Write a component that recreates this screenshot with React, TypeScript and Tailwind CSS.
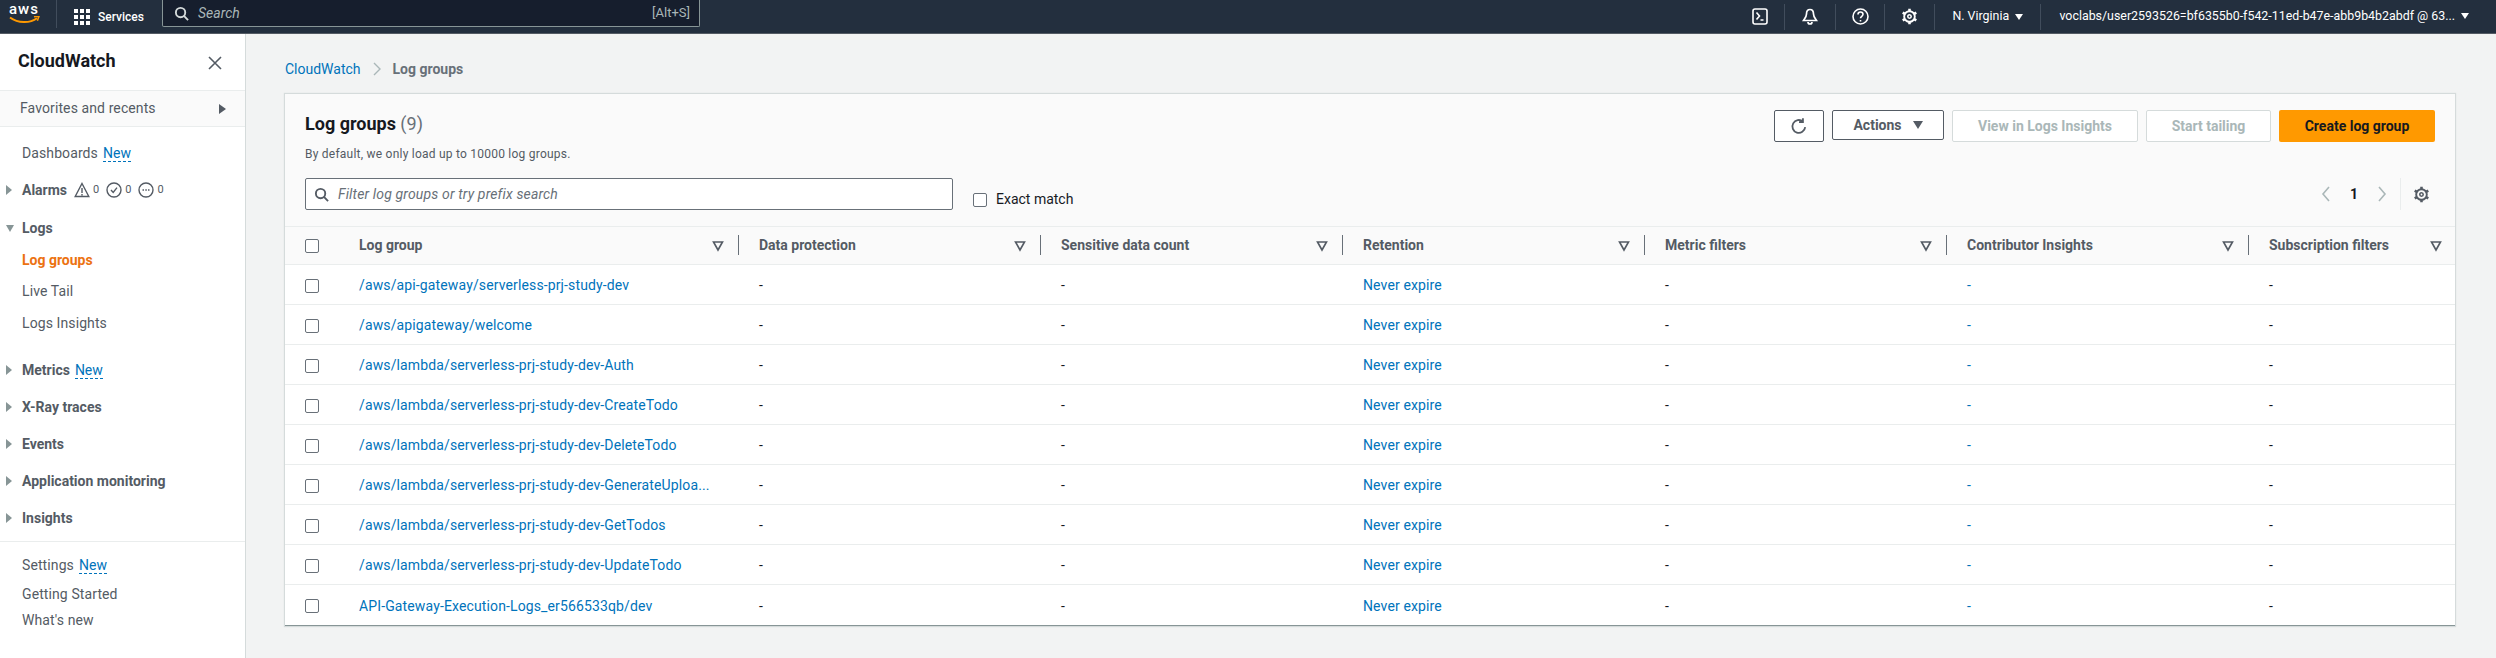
import type { ReactNode } from "react"

const groups = [
  "/aws/api-gateway/serverless-prj-study-dev",
  "/aws/apigateway/welcome",
  "/aws/lambda/serverless-prj-study-dev-Auth",
  "/aws/lambda/serverless-prj-study-dev-CreateTodo",
  "/aws/lambda/serverless-prj-study-dev-DeleteTodo",
  "/aws/lambda/serverless-prj-study-dev-GenerateUploa...",
  "/aws/lambda/serverless-prj-study-dev-GetTodos",
  "/aws/lambda/serverless-prj-study-dev-UpdateTodo",
  "API-Gateway-Execution-Logs_er566533qb/dev",
]

const columns = [
  "Log group",
  "Data protection",
  "Sensitive data count",
  "Retention",
  "Metric filters",
  "Contributor Insights",
  "Subscription filters",
]

const gridCols = "grid grid-cols-[54px_400px_302px_302px_302px_302px_302px_1fr]"

function Gear({ className }: { className: string }) {
  return (
    <svg className={className} viewBox="0 0 16 16" fill="none" stroke="currentColor">
      <circle cx="8" cy="8" r="5" strokeWidth={1.8} />
      <circle cx="8" cy="8" r="1.6" strokeWidth={1.5} />
      <path
        d="M8 .6v2.400M8 13v2.400M1.600 4.300l2.100 1.200M12.300 10.500l2.100 1.200M1.600 11.700l2.100-1.200M12.300 5.500l2.100-1.200"
        strokeWidth={2.4}
      />
    </svg>
  )
}

function Search({ className }: { className: string }) {
  return (
    <svg className={className} viewBox="0 0 16 16" fill="none" stroke="currentColor" strokeWidth={2}>
      <circle cx="7" cy="7" r="5" />
      <path d="M10.6 10.6L15 15" />
    </svg>
  )
}

function Caret({ open = false }: { open?: boolean }) {
  return (
    <span
      className={
        open
          ? "w-0 h-0 border-x-[4px] border-x-transparent border-t-[7px] border-t-[#879596]"
          : "w-0 h-0 border-y-[5px] border-y-transparent border-l-[6px] border-l-[#879596]"
      }
    />
  )
}

function NewTag() {
  return <span className="ml-[5px] font-normal text-[#0073bb] border-b border-dashed border-[#0073bb] leading-[16px]">New</span>
}

function NavLink({ children, className = "" }: { children: ReactNode; className?: string }) {
  return <div className={`flex items-center pl-[22px] h-5 text-[#545b64] tracking-[0.1px] ${className}`}>{children}</div>
}

function Section({ label, open, extra, className = "" }: { label: string; open?: boolean; extra?: ReactNode; className?: string }) {
  return (
    <div className={`flex items-center h-5 ${className}`}>
      <div className="w-[22px] pl-[6px] flex items-center">
        <Caret open={open} />
      </div>
      <span className="font-bold text-[#545b64]">{label}</span>
      {extra}
    </div>
  )
}

function Sidebar() {
  return (
    <aside className="w-[246px] shrink-0 bg-white border-r border-[#d5dbdb] text-[14px]">
      <div className="h-[56px] flex items-center justify-between pl-[18px] pr-[22px]">
        <span className="text-[18px] font-bold text-[#16191f] -mt-[3px]">CloudWatch</span>
        <svg className="w-[16px] h-[16px] text-[#545b64] mt-[2px]" viewBox="0 0 16 16" fill="none" stroke="currentColor" strokeWidth={1.6}>
          <path d="M2 2l12 12M14 2L2 14" />
        </svg>
      </div>
      <div className="h-[37px] flex items-center justify-between pl-[20px] pr-[19px] bg-[#fafafa] border-y border-[#eaeded] text-[#545b64] tracking-[0.1px]">
        <span>Favorites and recents</span>
        <span className="w-0 h-0 border-y-[5px] border-y-transparent border-l-[7px] border-l-[#545b64]" />
      </div>
      <NavLink className="mt-[16px]">
        Dashboards
        <NewTag />
      </NavLink>
      <Section
        label="Alarms"
        className="mt-[17px]"
        extra={
          <div className="flex items-center ml-[7px] text-[11px] text-[#545b64]">
            <svg className="w-[16px] h-[16px]" viewBox="0 0 16 16" fill="none" stroke="currentColor" strokeWidth={1.4}>
              <path d="M8 1.5L14.8 14.5H1.2zM8 6v5M8 12v1.4" />
            </svg>
            <span className="ml-[3px]">0</span>
            <svg className="w-[16px] h-[16px] ml-[7px]" viewBox="0 0 16 16" fill="none" stroke="currentColor" strokeWidth={1.4}>
              <circle cx="8" cy="8" r="7" />
              <path d="M5 8l2.2 2.4L11 5.6" />
            </svg>
            <span className="ml-[3px]">0</span>
            <svg className="w-[16px] h-[16px] ml-[7px]" viewBox="0 0 16 16" fill="none" stroke="currentColor" strokeWidth={1.4}>
              <circle cx="8" cy="8" r="7" />
              <path d="M4.5 8h1.5M7.3 8h1.5M10 8h1.5" />
            </svg>
            <span className="ml-[3px]">0</span>
          </div>
        }
      />
      <Section label="Logs" open className="mt-[18px]" />
      <NavLink className="mt-[12px]">
        <span className="text-[#ec7211] font-bold tracking-normal">Log groups</span>
      </NavLink>
      <NavLink className="mt-[11px]">Live Tail</NavLink>
      <NavLink className="mt-[12px]">Logs Insights</NavLink>
      <Section label="Metrics" className="mt-[27px]" extra={<NewTag />} />
      <Section label="X-Ray traces" className="mt-[17px]" />
      <Section label="Events" className="mt-[17px]" />
      <Section label="Application monitoring" className="mt-[17px]" />
      <Section label="Insights" className="mt-[17px]" />
      <div className="mt-[13px] border-t border-[#eaeded]" />
      <NavLink className="mt-[13px]">
        Settings
        <NewTag />
      </NavLink>
      <NavLink className="mt-[9px]">Getting Started</NavLink>
      <NavLink className="mt-[6px]">What's new</NavLink>
    </aside>
  )
}

function TopBar() {
  return (
    <header className="h-[34px] shrink-0 bg-[#232f3e] border-b border-[#545b64] flex items-start text-white text-[12.4px]">
      <div className="w-[56px] h-[33px] pl-[9px]">
        <span className="block font-medium text-[15px] leading-[18px] tracking-[1px] text-white">aws</span>
        <svg className="block w-[31px] h-[9px] -mt-[2px]" viewBox="0 0 31 9" fill="none">
          <path d="M1 1.5c8 6 20 6 27 .8" stroke="#ff9900" strokeWidth={2} />
          <path d="M25 .8l5-.5-1.600 4.500" stroke="#ff9900" strokeWidth={1.500} />
        </svg>
      </div>
      <div className="w-px h-[28px] bg-[#414d5c]" />
      <div className="w-[105px] h-[33px] flex items-center pl-[17px] gap-[8px] font-medium text-[12px]">
        <div className="grid grid-cols-3 gap-[2px] w-[16px]">
          {Array.from({ length: 9 }).map((_, i) => (
            <span key={i} className="w-1 h-1 bg-white" />
          ))}
        </div>
        <span>Services</span>
      </div>
      <div className="w-[538px] h-[27px] bg-[#161e2d] border border-t-0 border-[#879596] rounded-b-[2px] flex items-center pl-[11px] pr-[9px] text-[#aab7b8]">
        <Search className="w-[15px] h-[15px] text-[#d5dbdb]" />
        <span className="ml-[9px] italic text-[14px]">Search</span>
        <span className="ml-auto text-[13px]">[Alt+S]</span>
      </div>
      <div className="ml-auto h-[33px] flex items-center pr-[27px]">
        <div className="w-[50px] h-[26px] flex items-center justify-center border-r border-[#414d5c]">
          <svg className="w-[16px] h-[17px]" viewBox="0 0 16 17" fill="none" stroke="white" strokeWidth={1.6}>
            <rect x="1" y="1" width="14" height="15" rx="2" />
            <path d="M4.500 4.500l3 3.500-3 3.500M8.500 12h3" />
          </svg>
        </div>
        <div className="w-[51px] h-[26px] flex items-center justify-center border-r border-[#414d5c]">
          <svg className="w-[16px] h-[17px]" viewBox="0 0 16 17" fill="none" stroke="white" strokeWidth={1.7}>
            <path d="M8 1.500c-2.500 0-3.500 2-3.500 4.500 0 3-2 5-3 6.500h13c-1-1.500-3-3.500-3-6.500 0-2.500-1-4.500-3.500-4.500zM6 14a2 2 0 004 0" />
          </svg>
        </div>
        <div className="w-[49px] h-[26px] flex items-center justify-center border-r border-[#414d5c]">
          <svg className="w-[17px] h-[17px]" viewBox="0 0 17 17" fill="none" stroke="white" strokeWidth={1.6}>
            <circle cx="8.500" cy="8.500" r="7.500" />
            <path d="M6 6.500c0-1.500 1.200-2.500 2.500-2.500s2.500 1 2.500 2.300c0 2-2.500 2-2.500 4M8.500 12v1.500" />
          </svg>
        </div>
        <div className="w-[50px] h-[26px] flex items-center justify-center border-r border-[#414d5c]">
          <Gear className="w-[17px] h-[17px] text-white" />
        </div>
        <div className="w-[106px] h-[26px] flex items-center pl-[17px] gap-[6px] border-r border-[#414d5c]">
          <span>N. Virginia</span>
          <span className="w-0 h-0 border-x-[4px] border-x-transparent border-t-[6px] border-t-white" />
        </div>
        <div className="flex items-center pl-[18px] gap-[6px]">
          <span>voclabs/user2593526=bf6355b0-f542-11ed-b47e-abb9b4b2abdf @ 63...</span>
          <span className="w-0 h-0 border-x-[4px] border-x-transparent border-t-[6px] border-t-white" />
        </div>
      </div>
    </header>
  )
}

function Checkbox() {
  return <span className="block w-[14px] h-[14px] bg-white border border-[#687078] rounded-[2px]" />
}

function ColHeader({ label, last }: { label: string; last?: boolean }) {
  return (
    <div className="h-[37px] flex items-center justify-between pl-[20px] relative">
      <span className="font-bold text-[#545b64]">{label}</span>
      <svg className={`w-[12px] h-[12px] text-[#545b64] ${last ? "mr-[13px]" : "mr-[15px]"}`} viewBox="0 0 12 12" fill="none" stroke="currentColor" strokeWidth={1.6}>
        <path d="M1.500 2h9L6 10z" />
      </svg>
      {!last && <span className="absolute right-0 top-[8px] h-5 w-px bg-[#687078]" />}
    </div>
  )
}

function LogTable() {
  return (
    <div className="text-[14px]">
      <div className={`${gridCols} bg-[#fafafa] border-y border-[#eaeded]`}>
        <div className="flex items-center pl-[20px]">
          <Checkbox />
        </div>
        {columns.map((c, i) => (
          <ColHeader key={c} label={c} last={i === columns.length - 1} />
        ))}
      </div>
      {groups.map((g) => (
        <div key={g} className={`${gridCols} h-[40px] pt-[2px] items-center bg-white border-b border-[#eaeded] last:border-b-0 text-[#16191f]`}>
          <div className="pl-[20px]">
            <Checkbox />
          </div>
          <div className="pl-[20px] truncate text-[#0073bb] tracking-[0.13px]">{g}</div>
          <div className="pl-[20px]">-</div>
          <div className="pl-[20px]">-</div>
          <div className="pl-[20px] text-[#0073bb] tracking-[0.13px]">Never expire</div>
          <div className="pl-[20px]">-</div>
          <div className="pl-[20px] text-[#0073bb]">-</div>
          <div className="pl-[20px]">-</div>
        </div>
      ))}
    </div>
  )
}

function Card() {
  return (
    <section className="mt-[15px] bg-[#fafafa] border-b border-[#879596] shadow-[0_0_1px_1px_#d5dbdb]">
      <div className="h-[132px] px-[20px] pt-[16px]">
        <div className="flex items-start justify-between">
          <div>
            <h1 className="text-[18px] leading-[28px] font-bold text-[#16191f]">
              Log groups <span className="font-normal text-[#687078]">(9)</span>
            </h1>
            <p className="mt-[8px] text-[12px] leading-[16px] text-[#545b64] tracking-[0.23px]">By default, we only load up to 10000 log groups.</p>
          </div>
          <div className="flex items-start gap-[8px] text-[14px] font-bold">
            <button className="w-[50px] h-[32px] flex items-center justify-center bg-white border border-[#545b64] rounded-[2px] text-[#545b64]">
              <svg className="w-[18px] h-[18px]" viewBox="0 0 16 16" fill="none" stroke="currentColor" strokeWidth={1.6}>
                <path d="M13.500 9a5.700 5.700 0 11-2-5M11.500 1v3.500H8" />
              </svg>
            </button>
            <button className="w-[112px] h-[30px] flex items-center justify-center gap-[11px] bg-white border border-[#545b64] rounded-[2px] text-[#545b64]">
              Actions
              <span className="w-0 h-0 border-x-[5px] border-x-transparent border-t-[8px] border-t-[#545b64]" />
            </button>
            <button className="w-[186px] h-[32px] bg-white border border-[#d5dbdb] rounded-[2px] text-[#aab7b8]">View in Logs Insights</button>
            <button className="w-[125px] h-[32px] bg-white border border-[#d5dbdb] rounded-[2px] text-[#aab7b8]">Start tailing</button>
            <button className="w-[156px] h-[32px] bg-[#ff9900] rounded-[2px] text-[#16191f]">Create log group</button>
          </div>
        </div>
        <div className="mt-[16px] flex items-center">
          <div className="w-[648px] h-[32px] flex items-center bg-white border border-[#687078] rounded-[2px] pl-[8px]">
            <Search className="w-[15px] h-[15px] text-[#545b64]" />
            <span className="ml-[9px] italic text-[14px] text-[#687078] tracking-[0.15px]">Filter log groups or try prefix search</span>
          </div>
          <span className="block ml-[20px] w-[14px] h-[14px] bg-white border border-[#687078] rounded-[2px] mt-[11px]" />
          <span className="ml-[9px] text-[14px] text-[#16191f] mt-[11px]">Exact match</span>
          <div className="ml-auto flex items-center mr-[5px] h-[32px] text-[#aab7b8]">
            <svg className="w-[12px] h-[16px]" viewBox="0 0 12 16" fill="none" stroke="currentColor" strokeWidth={1.6}>
              <path d="M9 1L3 8l6 7" />
            </svg>
            <span className="mx-[18px] font-bold text-[14px] text-[#16191f]">1</span>
            <svg className="w-[12px] h-[16px]" viewBox="0 0 12 16" fill="none" stroke="currentColor" strokeWidth={1.6}>
              <path d="M3 1l6 7-6 7" />
            </svg>
            <span className="ml-[12px] w-px h-[32px] bg-[#eaeded]" />
            <Gear className="ml-[12px] w-[17px] h-[17px] text-[#545b64]" />
          </div>
        </div>
      </div>
      <LogTable />
    </section>
  )
}

export default function App() {
  return (
    <div className="h-[658px] w-[2496px] overflow-hidden flex flex-col bg-[#f2f3f3] font-['Roboto',sans-serif]">
      <TopBar />
      <div className="flex flex-1 min-h-0">
        <Sidebar />
        <main className="flex-1 pl-[39px] pr-[41px] pt-[25px]">
          <nav className="h-5 flex items-center text-[14px]">
            <span className="text-[#0073bb]">CloudWatch</span>
            <svg className="w-[12px] h-[16px] mx-[10px] text-[#aab7b8]" viewBox="0 0 12 16" fill="none" stroke="currentColor" strokeWidth={1.4}>
              <path d="M3 2l6 6-6 6" />
            </svg>
            <span className="font-bold text-[#687078]">Log groups</span>
          </nav>
          <Card />
        </main>
      </div>
    </div>
  )
}
